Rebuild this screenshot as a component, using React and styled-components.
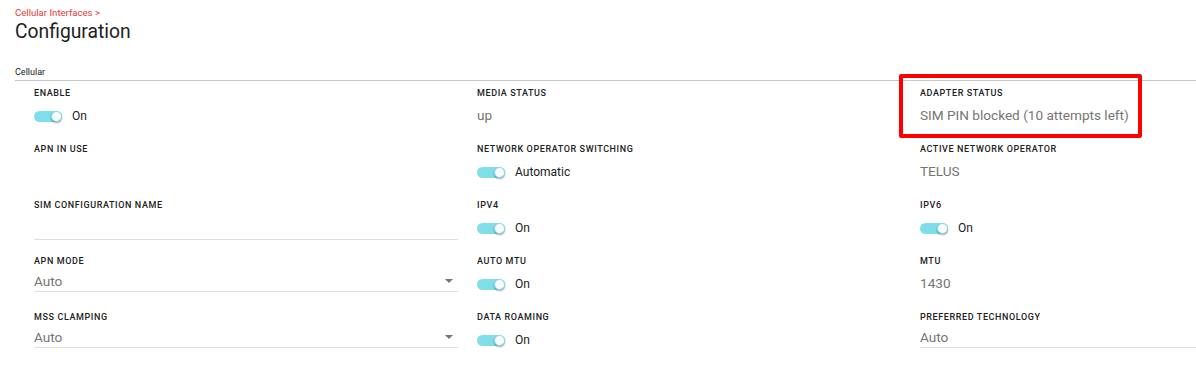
import React from 'react';
import styled, { createGlobalStyle } from 'styled-components';

const GlobalStyle = createGlobalStyle`
	html, body {
		margin: 0;
		padding: 0;
		background: #ffffff;
		overflow: hidden;
	}
	body {
		font-family: Roboto, 'Liberation Sans', Arial, sans-serif;
		color: #212121;
	}
`;

const fields = [
	[
		{ label: 'Enable', type: 'toggle', value: 'On' },
		{ label: 'Media Status', type: 'text', value: 'up' },
		{ label: 'Adapter Status', type: 'text', value: 'SIM PIN blocked (10 attempts left)', flagged: true },
	],
	[
		{ label: 'APN in use', type: 'text', value: '' },
		{ label: 'Network Operator Switching', type: 'toggle', value: 'Automatic' },
		{ label: 'Active Network Operator', type: 'text', value: 'TELUS' },
	],
	[
		{ label: 'SIM Configuration Name', type: 'input', value: '' },
		{ label: 'IPv4', type: 'toggle', value: 'On' },
		{ label: 'IPv6', type: 'toggle', value: 'On' },
	],
	[
		{ label: 'APN Mode', type: 'select', value: 'Auto' },
		{ label: 'Auto MTU', type: 'toggle', value: 'On' },
		{ label: 'MTU', type: 'text', value: '1430' },
	],
	[
		{ label: 'MSS Clamping', type: 'select', value: 'Auto' },
		{ label: 'Data Roaming', type: 'toggle', value: 'On' },
		{ label: 'Preferred Technology', type: 'underlined', value: 'Auto' },
	],
];

function FieldValue({ field }) {
	if (field.type === 'toggle') {
		return (
			<ToggleRow>
				<Track>
					<Thumb />
				</Track>
				<ToggleText>{field.value}</ToggleText>
			</ToggleRow>
		);
	}
	if (field.type === 'input') {
		return <EmptyInput />;
	}
	if (field.type === 'select' || field.type === 'underlined') {
		return (
			<SelectBox>
				<span>{field.value}</span>
				{field.type === 'select' && <Caret />}
			</SelectBox>
		);
	}
	return <TextValue>{field.value}</TextValue>;
}

function App() {
	return (
		<Page>
			<GlobalStyle />
			<Crumb>Cellular Interfaces &gt;</Crumb>
			<Title>Configuration</Title>
			<SectionHeader>Cellular</SectionHeader>
			<Grid>
				{fields.flat().map((field) => (
					<Field key={field.label} flagged={field.flagged}>
						<Label>{field.label}</Label>
						<FieldValue field={field} />
					</Field>
				))}
			</Grid>
		</Page>
	);
}

export default App;

const Page = styled.div`
	width: 1196px;
	height: 371px;
	overflow: hidden;
	padding-left: 15px;
	box-sizing: border-box;
`;

const Crumb = styled.div`
	padding-top: 6px;
	font-size: 9.6px;
	line-height: 14px;
	color: #e53935;
`;

const Title = styled.h1`
	margin: 0;
	font-size: 19.3px;
	font-weight: 400;
	line-height: 24px;
	color: #212121;
`;

const SectionHeader = styled.div`
	margin-top: 22px;
	width: 1300px;
	font-size: 9px;
	line-height: 12px;
	color: #212121;
	padding-bottom: 2px;
	border-bottom: 1px solid #c6c6c6;
`;

const Grid = styled.div`
	display: grid;
	grid-template-columns: repeat(3, 424px);
	grid-auto-rows: 56px;
	column-gap: 19px;
	padding: 6px 0 0 19px;
`;

const Field = styled.div`
	position: relative;
	display: flex;
	flex-direction: column;
	${(p) =>
		p.flagged &&
		`
		&::after {
			content: '';
			position: absolute;
			left: -21px;
			top: -13px;
			width: 235px;
			height: 56px;
			border: 4px solid #ff0000;
			border-radius: 2px;
		}
	`}
`;

const Label = styled.div`
	font-size: 9px;
	font-weight: 500;
	line-height: 12px;
	letter-spacing: 0.6px;
	text-transform: uppercase;
	color: #212121;
`;

const TextValue = styled.div`
	margin-top: 7px;
	font-size: 13.6px;
	line-height: 18px;
	color: #757575;
	min-height: 18px;
`;

const ToggleRow = styled.div`
	margin-top: 8px;
	height: 18px;
	display: flex;
	align-items: center;
	gap: 10px;
`;

const Track = styled.div`
	position: relative;
	width: 28px;
	height: 11px;
	border-radius: 6px;
	background: #80deea;
`;

const Thumb = styled.div`
	position: absolute;
	right: 0;
	top: 0;
	width: 11px;
	height: 11px;
	border-radius: 50%;
	background: #fafafa;
	box-shadow: 0 1px 2px rgba(0, 0, 0, 0.35);
	box-sizing: border-box;
	border: 1px solid #80deea;
`;

const ToggleText = styled.span`
	font-size: 12px;
	color: #212121;
`;

const EmptyInput = styled.div`
	margin-top: 6px;
	height: 22px;
	border-bottom: 1px solid #e0e0e0;
`;

const SelectBox = styled.div`
	margin-top: 6px;
	height: 18px;
	display: flex;
	align-items: center;
	justify-content: space-between;
	font-size: 13.6px;
	line-height: 17px;
	color: #757575;
	border-bottom: 1px solid #e0e0e0;
	padding-right: 5px;

	span {
		margin-top: -2px;
	}
`;

const Caret = styled.span`
	width: 0;
	height: 0;
	border-left: 4px solid transparent;
	border-right: 4px solid transparent;
	border-top: 4px solid #757575;
`;
